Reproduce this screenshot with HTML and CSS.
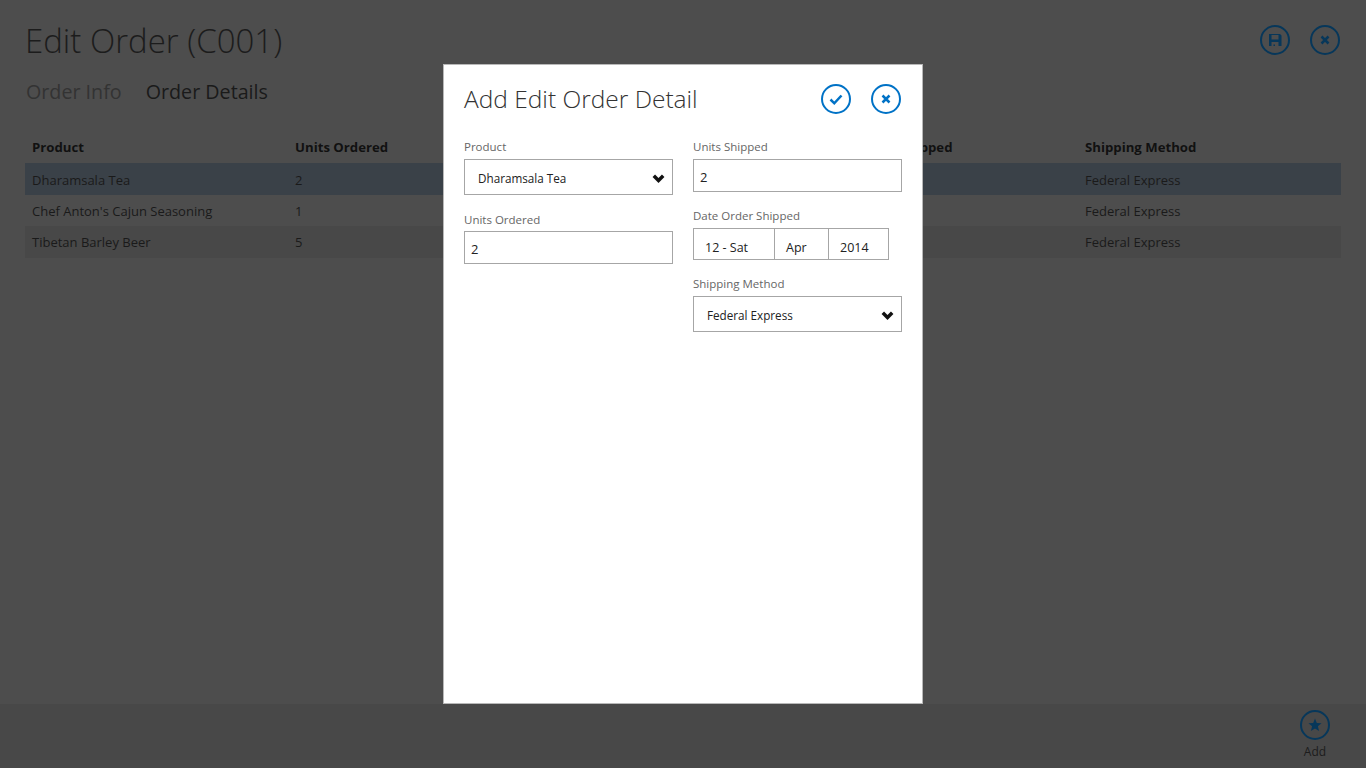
FILE: index.html
```html
<!DOCTYPE html>
<html lang="en">
<head>
    <meta charset="UTF-8">
    <title>Edit Order</title>
    <link rel="stylesheet" href="styles.css">
</head>
<body>
    <div class="page">
        <header class="page-header">
            <h1 class="page-title">Edit Order (C001)</h1>
            <div class="page-actions">
                <svg class="round-icon dim" viewBox="0 0 30 30">
                    <circle cx="15" cy="15" r="14"/>
                    <path class="solid" fill-rule="evenodd" d="M9 9h11l1.500 1.500v10.500h-12.500zM11.500 10v4.500h7v-4.500zM11.500 17v4h2v-1.500h1.500v1.500h3.500v-4z"/>
                </svg>
                <svg class="round-icon dim" viewBox="0 0 30 30">
                    <circle cx="15" cy="15" r="14"/>
                    <path class="mark" d="M11.500 11.500l7 7M18.500 11.500l-7 7"/>
                </svg>
            </div>
        </header>
        <nav class="tabs">
            <span class="tab">Order Info</span>
            <span class="tab active">Order Details</span>
        </nav>
        <div class="grid-table">
            <div class="row head">
                <span>Product</span><span>Units Ordered</span><span>Units Shipped</span><span>Date Order Shipped</span><span>Shipping Method</span>
            </div>
            <div class="row selected">
                <span>Dharamsala Tea</span><span>2</span><span></span><span></span><span>Federal Express</span>
            </div>
            <div class="row">
                <span>Chef Anton's Cajun Seasoning</span><span>1</span><span></span><span></span><span>Federal Express</span>
            </div>
            <div class="row alt">
                <span>Tibetan Barley Beer</span><span>5</span><span></span><span></span><span>Federal Express</span>
            </div>
        </div>
        <footer class="app-bar">
            <div class="app-bar-btn">
                <svg class="round-icon dim" viewBox="0 0 30 30">
                    <circle cx="15" cy="15" r="14"/>
                    <path class="solid" d="M15 8.500l1.800 4.500 4.700.3-3.600 3 1.200 4.700-4.100-2.600-4.100 2.600 1.200-4.700-3.600-3 4.700-.3z"/>
                </svg>
                <span>Add</span>
            </div>
        </footer>
    </div>

    <div class="dialog">
        <div class="dialog-header">
            <h2 class="dialog-title">Add Edit Order Detail</h2>
            <div class="dialog-actions">
                <svg class="round-icon" viewBox="0 0 30 30">
                    <circle cx="15" cy="15" r="14"/>
                    <path class="mark" d="M9.500 15.500l3.800 3.800 7.200-7.800"/>
                </svg>
                <svg class="round-icon" viewBox="0 0 30 30">
                    <circle cx="15" cy="15" r="14"/>
                    <path class="mark" d="M11.500 11.500l7 7M18.500 11.500l-7 7"/>
                </svg>
            </div>
        </div>
        <div class="dialog-form">
            <div class="form-col">
                <div class="field gap-left">
                    <label>Product</label>
                    <div class="select"><span>Dharamsala Tea</span>
                        <svg class="chevron" viewBox="0 0 13 9"><path d="M1.800 1.800l4.700 4.700 4.700-4.700"/></svg>
                    </div>
                </div>
                <div class="field field-tight">
                    <label>Units Ordered</label>
                    <div class="input">2</div>
                </div>
            </div>
            <div class="form-col">
                <div class="field gap-right">
                    <label>Units Shipped</label>
                    <div class="input">2</div>
                </div>
                <div class="field gap-date">
                    <label>Date Order Shipped</label>
                    <div class="date-picker">
                        <span class="date-day">12 - Sat</span>
                        <span class="date-month">Apr</span>
                        <span class="date-year">2014</span>
                    </div>
                </div>
                <div class="field">
                    <label>Shipping Method</label>
                    <div class="select"><span>Federal Express</span>
                        <svg class="chevron" viewBox="0 0 13 9"><path d="M1.800 1.800l4.700 4.700 4.700-4.700"/></svg>
                    </div>
                </div>
            </div>
        </div>
    </div>
</body>
</html>
```

FILE: styles.css
```css
* {
    box-sizing: border-box;
}

html, body {
    height: 100%;
}

body {
    margin: 0;
    font-family: "Open Sans", "Noto Sans", sans-serif;
    background-color: #4d4d4d;
    color: #1a1a1a;
    overflow: hidden;
}

.page {
    height: 768px;
    display: flex;
    flex-direction: column;
    padding: 0 25px;
}

.page-header {
    display: flex;
    justify-content: space-between;
    align-items: center;
    height: 80px;
}

.page-title {
    margin: 1px 0 0;
    font-size: 33px;
    font-weight: 300;
    color: #1c1c1c;
}

.page-actions {
    display: flex;
    gap: 20px;
    margin-right: 1px;
}

.round-icon {
    width: 30px;
    height: 30px;
    display: block;
    fill: none;
}

.round-icon circle {
    stroke: #0072c6;
    stroke-width: 2;
}

.round-icon .mark {
    stroke: #0072c6;
    stroke-width: 2.500;
    fill: none;
}

.round-icon .solid {
    fill: #0072c6;
}

.round-icon.dim circle {
    stroke: #07375a;
}

.round-icon.dim .mark {
    stroke: #07375a;
}

.round-icon.dim .solid {
    fill: #07375a;
}

.tabs {
    display: flex;
    gap: 24px;
    padding-left: 1px;
    height: 35px;
    font-size: 19.700px;
    line-height: 24px;
}

.tab {
    color: #333;
}

.tab.active {
    color: #1a1a1a;
}

.grid-table {
    margin-top: 17px;
    width: 1316px;
    font-size: 13px;
}

.row {
    display: grid;
    grid-template-columns: 263px 270px 258px 262px 1fr;
    height: 31.67px;
    align-items: center;
    padding-left: 7px;
    padding-top: 1px;
}

.row.head {
    height: 31px;
    padding-top: 0;
    padding-bottom: 2px;
    font-weight: 700;
    font-size: 13.200px;
    color: #111;
}

.row.selected {
    background-color: #3a4148;
    padding-top: 2px;
}

.row.alt {
    background-color: #484848;
    padding-top: 0;
}

.app-bar {
    margin: auto -25px 0;
    height: 64px;
    background-color: #484848;
    display: flex;
    justify-content: flex-end;
    padding-right: 36px;
}

.app-bar-btn {
    display: flex;
    flex-direction: column;
    align-items: center;
    gap: 3px;
    padding-top: 6px;
    font-size: 12px;
    color: #1c1c1c;
}

.dialog {
    position: absolute;
    left: 443px;
    top: 64px;
    width: 480px;
    height: 640px;
    background-color: #fff;
    border: 1px solid #b8b8b8;
    padding: 0 20px;
    color: #222;
}

.dialog-header {
    display: flex;
    justify-content: space-between;
    align-items: center;
    height: 68px;
}

.dialog-title {
    margin: 0 0 2px;
    font-size: 24.500px;
    font-weight: 300;
    color: #333;
}

.dialog-actions {
    display: flex;
    gap: 20px;
    margin-right: 1px;
}

.dialog-form {
    display: grid;
    grid-template-columns: 209px 209px;
    gap: 20px;
    padding-top: 6px;
}

.field label {
    display: block;
    font-size: 11.500px;
    line-height: 16px;
    color: #666;
    margin-bottom: 4px;
}

.field-tight label {
    margin-bottom: 3px;
}

.gap-left {
    margin-bottom: 17px;
}

.gap-right {
    margin-bottom: 16px;
}

.gap-date {
    margin-bottom: 16px;
}

.select {
    height: 36px;
    border: 1px solid #a6a6a6;
    display: flex;
    align-items: center;
    justify-content: space-between;
    padding: 2px 7px 0 13px;
    font-size: 11.700px;
}

.chevron {
    width: 13px;
    height: 9px;
    fill: none;
    stroke: #111;
    stroke-width: 3.500;
}

.input {
    height: 33px;
    border: 1px solid #a6a6a6;
    display: flex;
    align-items: center;
    padding: 2px 6px 0;
    font-size: 13px;
}

.date-picker {
    display: flex;
    height: 32px;
    width: 196px;
    border: 1px solid #a6a6a6;
    font-size: 12.500px;
}

.date-picker span {
    display: flex;
    align-items: center;
    padding: 7px 0 0 11px;
}

.date-day {
    width: 81px;
    border-right: 1px solid #a6a6a6;
}

.date-month {
    width: 54px;
    border-right: 1px solid #a6a6a6;
}

.date-year {
    flex: 1;
}
```
